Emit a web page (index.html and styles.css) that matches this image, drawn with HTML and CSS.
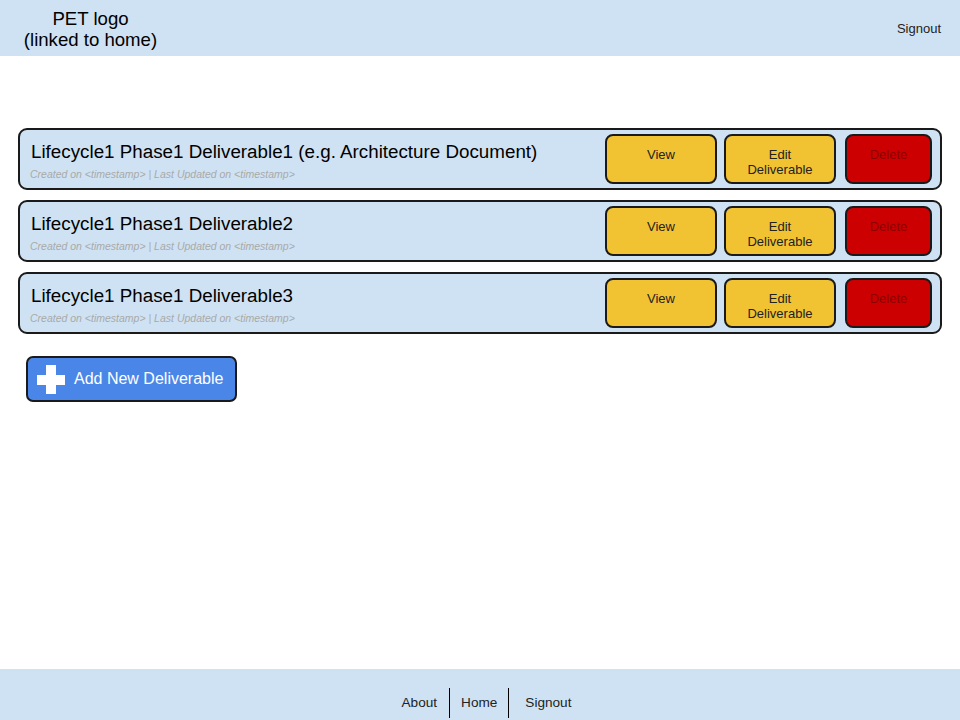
FILE: index.html
```html
<!DOCTYPE html>
<html lang="en">
<head>
<meta charset="utf-8">
<title>Deliverables</title>
<link rel="stylesheet" href="styles.css">
</head>
<body>
<header class="topbar">
  <a class="logo" href="#">PET logo<br>(linked to home)</a>
  <a class="top-signout" href="#">Signout</a>
</header>
<main class="content">
  <ul class="list">
    <li class="card">
      <div class="card-text">
        <div class="card-title">Lifecycle1 Phase1 Deliverable1 (e.g. Architecture Document)</div>
        <div class="card-meta">Created on &lt;timestamp&gt; | Last Updated on &lt;timestamp&gt;</div>
      </div>
      <div class="actions">
        <button class="btn btn-yellow btn-view">View</button>
        <button class="btn btn-yellow btn-edit">Edit<br>Deliverable</button>
        <button class="btn btn-red">Delete</button>
      </div>
    </li>
    <li class="card">
      <div class="card-text">
        <div class="card-title">Lifecycle1 Phase1 Deliverable2</div>
        <div class="card-meta">Created on &lt;timestamp&gt; | Last Updated on &lt;timestamp&gt;</div>
      </div>
      <div class="actions">
        <button class="btn btn-yellow btn-view">View</button>
        <button class="btn btn-yellow btn-edit">Edit<br>Deliverable</button>
        <button class="btn btn-red">Delete</button>
      </div>
    </li>
    <li class="card">
      <div class="card-text">
        <div class="card-title">Lifecycle1 Phase1 Deliverable3</div>
        <div class="card-meta">Created on &lt;timestamp&gt; | Last Updated on &lt;timestamp&gt;</div>
      </div>
      <div class="actions">
        <button class="btn btn-yellow btn-view">View</button>
        <button class="btn btn-yellow btn-edit">Edit<br>Deliverable</button>
        <button class="btn btn-red">Delete</button>
      </div>
    </li>
  </ul>
  <button class="add-btn">
    <svg class="plus" width="28" height="29" viewBox="0 0 28 29" aria-hidden="true">
      <path d="M9 0h10v10h9v10h-9v9H9v-9H0V10h9z" fill="#fff"/>
    </svg>
    <span>Add New Deliverable</span>
  </button>
</main>
<footer class="footer">
  <a class="foot-link foot-about" href="#">About</a>
  <span class="sep"></span>
  <a class="foot-link foot-home" href="#">Home</a>
  <span class="sep"></span>
  <a class="foot-link foot-last" href="#">Signout</a>
</footer>
</body>
</html>
```
FILE: styles.css
```css
* { box-sizing: border-box; }
html, body { margin: 0; padding: 0; }
body {
  width: 960px;
  height: 720px;
  display: flex;
  flex-direction: column;
  font-family: "Liberation Sans", Arial, sans-serif;
  color: #000;
  background: #fff;
  overflow: hidden;
}
a { color: inherit; text-decoration: none; }

.topbar {
  height: 56px;
  background: #cfe2f3;
  display: flex;
  justify-content: space-between;
  align-items: flex-start;
  padding: 8px 19px 0 0;
}
.logo {
  width: 181px;
  text-align: center;
  font-size: 18.6px;
  line-height: 21px;
}
.top-signout {
  font-size: 13px;
  line-height: 15px;
  margin-top: 13px;
  color: #222;
}

.content {
  flex: 1;
  padding: 72px 18px 0 18px;
}
.list {
  list-style: none;
  margin: 0;
  padding: 0;
  display: flex;
  flex-direction: column;
  gap: 10px;
}
.card {
  height: 62px;
  background: #cfe2f3;
  border: 2px solid #1a1a1a;
  border-radius: 9px;
  display: flex;
  justify-content: space-between;
  align-items: center;
  padding: 0 8px 0 11px;
}
.card-text {
  align-self: flex-start;
  padding-top: 11px;
}
.card-title {
  font-size: 18.8px;
  line-height: 22px;
  color: #000;
}
.card-meta {
  margin-top: 5px;
  margin-left: -1px;
  font-size: 10.5px;
  line-height: 12px;
  font-style: italic;
  color: #a9a9a9;
}
.actions {
  display: flex;
  gap: 7px;
}
.btn {
  height: 50px;
  border: 2px solid #1a1a1a;
  border-radius: 8px;
  font-family: "Liberation Sans", Arial, sans-serif;
  font-size: 13px;
  line-height: 15px;
  padding: 11px 0 0 0;
  text-align: center;
  display: flex;
  flex-direction: column;
  align-items: center;
  justify-content: flex-start;
}
.btn-yellow { background: #f1c232; color: #222; width: 112px; }
.btn-edit { margin-right: 2px; }
.btn-red { background: #cc0000; color: #8a0000; width: 87px; }

.add-btn {
  margin: 22px 0 0 8px;
  width: 211px;
  height: 46px;
  background: #4a86e8;
  border: 2px solid #1a1a1a;
  border-radius: 7px;
  display: flex;
  align-items: center;
  gap: 9px;
  padding: 0 0 0 9px;
  color: #fff;
  font-family: "Liberation Sans", Arial, sans-serif;
  font-size: 16px;
}
.plus { display: block; flex: none; }

.footer {
  height: 51px;
  background: #cfe2f3;
  display: flex;
  justify-content: center;
  align-items: flex-end;
  padding-left: 13px;
}
.foot-link {
  font-size: 13.6px;
  line-height: 15px;
  color: #222;
  padding: 0 13px 10px 13px;
}
.foot-about { padding-right: 12px; }
.foot-home { padding-left: 11px; padding-right: 11px; }
.foot-last { padding-left: 16px; }
.sep {
  width: 1px;
  height: 30px;
  background: #000;
  margin-bottom: 2px;
}
```
